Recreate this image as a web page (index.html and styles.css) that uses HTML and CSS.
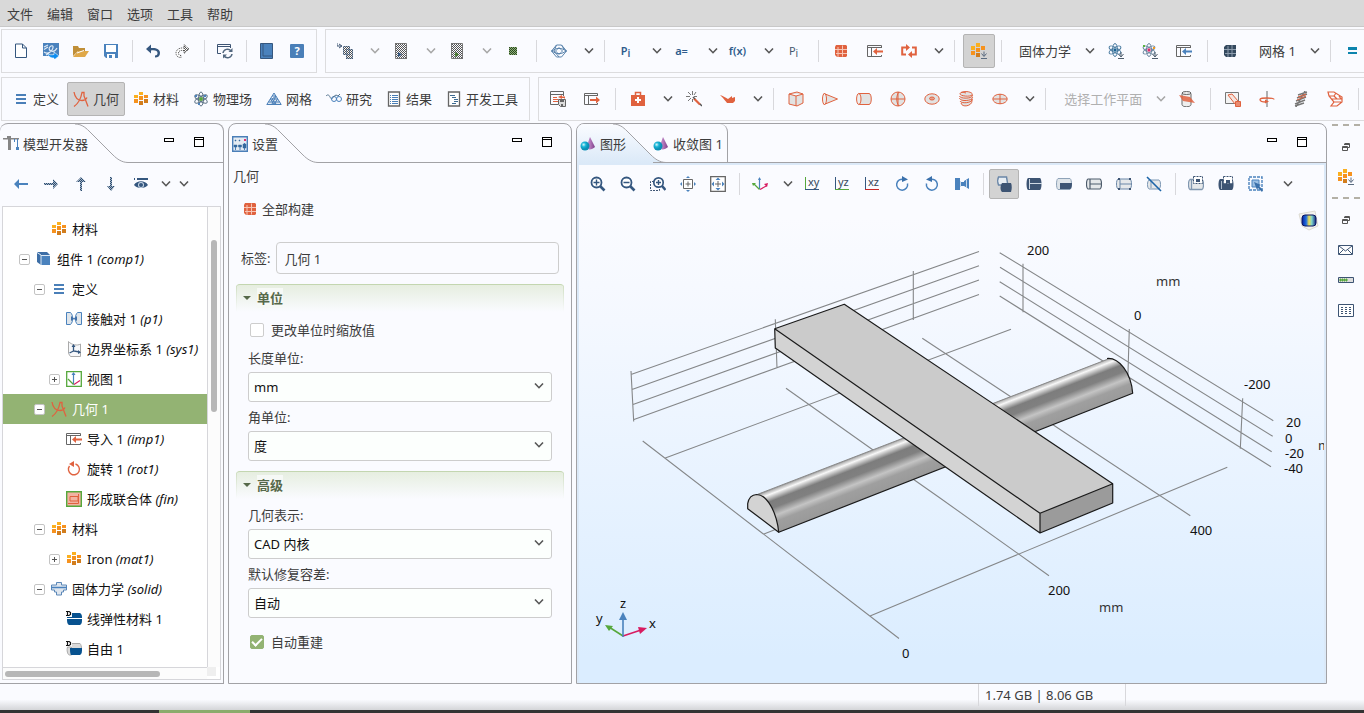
FILE: index.html
```html
<!DOCTYPE html>
<html lang="zh-CN">
<head>
<meta charset="utf-8">
<title>模型开发器</title>
<link rel="stylesheet" href="styles.css">
</head>
<body>
<svg class="sprite" aria-hidden="true">
  <defs>
    <pattern id="dither" width="2" height="2" patternUnits="userSpaceOnUse"><path fill="#555" d="M0 0h1v1H0zM1 1h1v1H1z"/></pattern>
    <pattern id="dither-blue" width="2" height="2" patternUnits="userSpaceOnUse"><path fill="#a5b4c6" d="M0 0h2v2H0z"/><path fill="#2b4c70" d="M0 0h1v1H0zM1 1h1v1H1z"/></pattern>
    <pattern id="dither-green" width="2" height="2" patternUnits="userSpaceOnUse"><path fill="#8fb07a" d="M0 0h2v2H0z"/><path fill="#2c4a20" d="M0 0h1v1H0zM1 1h1v1H1z"/></pattern>
    <linearGradient id="cone"><stop offset="0" stop-color="#c9a0cf"/><stop offset=".5" stop-color="#b074b8"/><stop offset="1" stop-color="#7c3f88"/></linearGradient>
    <radialGradient id="ball" cx=".35" cy=".35"><stop offset="0" stop-color="#d5f6fb"/><stop offset=".5" stop-color="#18b5d6"/><stop offset="1" stop-color="#0a8fb5"/></radialGradient>
    <linearGradient id="rainbow"><stop offset="0" stop-color="#0a1f9a"/><stop offset=".3" stop-color="#1f6fe0"/><stop offset=".5" stop-color="#f2dc4a"/><stop offset=".7" stop-color="#7fd6d0"/><stop offset="1" stop-color="#10207a"/></linearGradient>
  </defs>
  <symbol id="chev" viewBox="0 0 16 16"><path d="m4 5.500 4 4.200 4-4.200" fill="none" stroke="currentColor" stroke-width="1.600"/></symbol>
  <symbol id="new" viewBox="0 0 16 16"><path d="M2.500 1h7l4 4v9.500h-11zM9.500 1v4h4" fill="#fff" stroke="#35577f"/></symbol>
  <symbol id="app" viewBox="0 0 16 16"><path d="M0 0h16v13H0z" fill="#4a82bd"/><path d="M1 9c3 2 6 1 8-2s1-5-1-4-3 4 0 5 5-1 6-3M1 4l4-2M1 6.500 5 4M3 12l3-2" fill="none" stroke="#dfeaf5" stroke-width="1.200"/><path d="M5 10c1 2 3 2 6 1.500V9l5 4-5 4v-2c-4 0-6-2-6-5z" fill="#0d8df0" stroke="#fff" stroke-width=".6"/></symbol>
  <symbol id="open" viewBox="0 0 16 16"><path d="M0 13V3h5l1 2h6v3H5z" fill="#c08f38"/><path d="m0 14 5-6h11l-4 6z" fill="#dfa849"/><path d="m4 10 4-1.500 3-1" stroke="#fff" fill="none"/></symbol>
  <symbol id="save" viewBox="0 0 16 16"><path d="M1 1h14v14H3l-2-2z" fill="#4a82bd"/><path d="M3 2h10v7H3zM4 11h8v4H4z" fill="#fff"/><path d="M6 12h3v3H6z" fill="#4a82bd"/></symbol>
  <symbol id="undo" viewBox="0 0 16 16"><path d="m1 6 5-4.500V5c5-.5 9 1 9 5 0 3-2 4.500-5 4.500v-2c2 0 2.500-1 2.500-2.500 0-2-2-3-6.500-2.500v3z" fill="#35577f"/></symbol>
  <symbol id="redo" viewBox="0 0 16 16"><path d="m14 6-5-4.500V5C4 4.500 1 7 1 10s2 4.500 5 4.500v-2c-2 0-2.500-1-2.500-2.500 0-2 2-3 5.500-2.500v3z" fill="#fff" stroke="#444" stroke-dasharray="1 1"/><path d="m9 2 5 4-5 4z" fill="url(#dither)"/></symbol>
  <symbol id="reset" viewBox="0 0 16 16"><path d="M4 10.500H.5v-9h13V5M1 3.500h12" fill="none" stroke="#3d5473"/><path d="M6 10a4.500 4.500 0 0 1 8-2M15 11a4.500 4.500 0 0 1-8 2" fill="none" stroke="#52677f" stroke-width="1.500"/><path d="M15.500 5v4h-4zM6 15.500v-4h4z" fill="#52677f"/></symbol>
  <symbol id="book" viewBox="0 0 16 16"><path d="M1.500.5h12v15h-12z" fill="#4a82bd" stroke="#35577f"/><path d="M4 1v12h9" fill="none" stroke="#35577f"/></symbol>
  <symbol id="eq3" viewBox="0 0 16 16"><path d="M3 3h10v2H3zM3 7h10v2H3zM3 11h10v2H3z" fill="#4a7fb8"/></symbol>
  <symbol id="compass" viewBox="0 0 16 16"><path d="M1 15.500C6 12 8 7 9 1.500h2V5l4 10.500M1 1c1 6 4 8.500 8 8.500 2 0 4-1 5-3" fill="none" stroke="#e0623f" stroke-width="1.300"/></symbol>
  <symbol id="mat" viewBox="0 0 16 16"><path fill="#fbb01f" d="M6 1h4v3H6zM1 4h4v3H1z"/><path fill="#f6921e" d="M6 5h4v4H6zM1 8h4v4H1zM11 4h4v3h-4z"/><path fill="#d27d1d" d="M6 10h4v4H6zM11 8h4v4h-4z"/></symbol>
  <symbol id="matadd" viewBox="0 0 16 16"><g transform="translate(-1 0)"><path fill="#fbb01f" d="M6 0h4v4H6zM1 3h4v4H1z"/><path fill="#f6921e" d="M6 5h4v4H6zM1 8h4v4H1zM11 3h4v4h-4z"/><path fill="#d27d1d" d="M6 10h4v4H6z"/></g><path d="M10 15.500h6M13 8.500V13m-2.500-2.500 2.500 3 2.500-3" fill="none" stroke="#5a6b80"/></symbol>
  <symbol id="atom" viewBox="0 0 16 16"><g fill="none" stroke="#5d7286"><ellipse cx="8" cy="8" rx="2.500" ry="7"/><ellipse cx="8" cy="8" rx="2.500" ry="7" transform="rotate(60 8 8)"/><ellipse cx="8" cy="8" rx="2.500" ry="7" transform="rotate(120 8 8)"/></g><circle cx="8" cy="8" r="2" fill="#5aa63e"/><path d="M2 4h2v2H2zM11 4h2v2h-2zM5 12h2v2H5z" fill="#4a82bd"/></symbol>
  <symbol id="atomadd" viewBox="0 0 16 16"><g fill="none" stroke="#4a7ba0"><ellipse cx="7" cy="7" rx="2.500" ry="6.500"/><ellipse cx="7" cy="7" rx="2.500" ry="6.500" transform="rotate(60 7 7)"/><ellipse cx="7" cy="7" rx="2.500" ry="6.500" transform="rotate(120 7 7)"/></g><circle cx="7" cy="7" r="1.700" fill="#1a6394"/><path d="M10 15.500h6M13 9v4m-2.500-2 2.500 3 2.500-3" fill="none" stroke="#4d5c6c"/></symbol>
  <symbol id="atommulti" viewBox="0 0 16 16"><g fill="none" stroke="#6b87a0"><ellipse cx="7" cy="7" rx="2.500" ry="6.500"/><ellipse cx="7" cy="7" rx="2.500" ry="6.500" transform="rotate(60 7 7)"/><ellipse cx="7" cy="7" rx="2.500" ry="6.500" transform="rotate(120 7 7)"/></g><circle cx="7" cy="7" r="1.700" fill="#e0306e"/><path d="M1 2h2v2H1z" fill="#5ab33e"/><path d="M11 4h2v2h-2z" fill="#f59a1e"/><path d="M10 15.500h6M13 9v4m-2.500-2 2.500 3 2.500-3" fill="none" stroke="#4d5c6c"/></symbol>
  <symbol id="mesh" viewBox="0 0 16 16"><path d="M8 2 .8 13.500h14.400zM4.500 8h7L8 13.500zM6 5h4l-4 8M10 5 6 8l4 5M2.500 11h11" fill="#dce6f1" stroke="#4a7fb8"/></symbol>
  <symbol id="study" viewBox="0 0 16 16"><path d="M0 5c2-2 3-1 4 1s2 3 3 0" fill="none" stroke="#55748f"/><circle cx="8" cy="8" r="2.500" fill="none" stroke="#4a82bd"/><circle cx="13" cy="8" r="2.500" fill="none" stroke="#4a82bd"/><path d="m7 6 3-2 2 1 2-2" fill="none" stroke="#55748f"/></symbol>
  <symbol id="result" viewBox="0 0 16 16"><path d="M2.500 1h11v14h-11z" fill="#fff" stroke="#666" stroke-width="1.300"/><path d="M4 4.500h1m1 0h6m-8 2h1m1 0h6m-8 2h1m1 0h6m-8 2h1m1 0h6m-8 2h1m1 0h6" stroke="#4a7fb8"/></symbol>
  <symbol id="dev" viewBox="0 0 16 16"><path d="M2.500 1h11v14h-11z" fill="#fff" stroke="#666" stroke-width="1.300"/><path d="M4 4.500h5m-3 2h4m-2 2h4m-4 2h4m-6 2h4" stroke="#3f6c93"/></symbol>
  <symbol id="copyrun" viewBox="0 0 16 16"><path d="M0 0v3h4M2 1l3 2-3 2" fill="none" stroke="#3d5473"/><path d="M6 3h7v9H6zM9 6h7v10H9z" fill="url(#dither)"/><path d="M6.500 3.500h6v8h-6zM9.500 6.500h6v9h-6z" fill="none" stroke="#35577f" stroke-dasharray="1 1"/></symbol>
  <symbol id="runblue" viewBox="0 0 16 16"><path d="M2 0h12v16H2z" fill="url(#dither)"/><path d="M2.500.5h11v15h-11z" fill="none" stroke="#777"/><path d="m5 9 4 2.500L5 14z" fill="#35577f"/></symbol>
  <symbol id="rungreen" viewBox="0 0 16 16"><path d="M2 0h12v16H2z" fill="url(#dither)"/><path d="M2.500.5h11v15h-11z" fill="none" stroke="#777"/><path d="m6 9 4 2.500L6 14z" fill="#477a30"/></symbol>
  <symbol id="stop" viewBox="0 0 16 16"><path d="M4 4h8v8H4z" fill="url(#dither-green)"/></symbol>
  <symbol id="diamond" viewBox="0 0 16 16"><path d="M.5 8 5.500 2h5l5 6-5 6h-5zM.5 8l5-2.500h5l5 2.500-5 2.500h-5zM5.500 2 3 8l5 6M10.500 2l3 5M8 4.500 11.500 8 8 11.500 4.500 8z" fill="none" stroke="#5b84ad"/></symbol>
  <symbol id="cube" viewBox="0 0 16 16"><path d="m2 4 1-2h10l1 1v10l-1 1H4l-2-2z" fill="#e0623f"/><path d="M5 4v10M9.500 2.500v11M2 6.500h12M3 10.500h11" stroke="#f7c5b5" fill="none"/></symbol>
  <symbol id="cubenavy" viewBox="0 0 16 16"><path d="m2 4 2-2h10v10l-1 2H4l-2-2z" fill="#34495e"/><path d="M6 3v11M10 2v12M2 6.500h12M3 10.500h11" stroke="#8d9dae" fill="none"/></symbol>
  <symbol id="importred" viewBox="0 0 16 16"><path d="M14.500 5V2.500H.500v11h14V12M1 4.500h13M4.500 5v8" fill="none" stroke="#666"/><path d="m6 8.500 4-3.500v2.500h6v2h-6V12z" fill="#e0623f"/></symbol>
  <symbol id="importblue" viewBox="0 0 16 16"><path d="M14.500 5V2.500H.500v11h14V12M1 4.500h13M4.500 5v8" fill="none" stroke="#666"/><path d="m6 8.500 4-3.500v2.500h6v2h-6V12z" fill="#4a82bd"/></symbol>
  <symbol id="exportred" viewBox="0 0 16 16"><path d="M13.500 5V2.500H.500v11h13V12M1 4.500h12M4.500 5v8" fill="none" stroke="#666"/><path d="m16 9-4-3.500V8H6v2h6v2.500z" fill="#e0623f"/></symbol>
  <symbol id="loop" viewBox="0 0 16 16"><path d="M6 4.500H1.200v7H5M10 11.500h4.800v-7H11" fill="none" stroke="#e0623f" stroke-width="2"/><path d="m5 1 4 3.500L5 8zM11 8v7l-4-3.500z" fill="#e0623f"/></symbol>
  <symbol id="eq2" viewBox="0 0 16 16"><path d="M3 4h9v3H3zM3 9h9v2H3z" fill="#0c84ad"/></symbol>
  <symbol id="report" viewBox="0 0 16 16"><path d="M8 13.500H.5v-13h13V5M.5 3.500h13" fill="none" stroke="#666"/><path d="M3 6.500h4m-4 2h5m-5 2h5" stroke="#e0623f"/><path d="m8 6 4-2v1.500h3v2h-1V7h-2v1z" fill="#e0623f"/><path d="M8.500 8.500h7v7h-5l-2-2z" fill="#ddd" stroke="#666"/><path d="M10 9h4v2h-4zM11 13h2v2h-2z" fill="#666"/></symbol>
  <symbol id="medkit" viewBox="0 0 16 16"><path d="M1 4h14v11H1z" fill="#e0623f"/><path d="M5.500 4V1.500h5V4" fill="none" stroke="#e0623f" stroke-width="1.500"/><path d="M7 6h2v2h2v2H9v2H7v-2H5V8h2z" fill="#fff"/></symbol>
  <symbol id="wand" viewBox="0 0 16 16"><path d="M6.500 0v4m0 4v3M0 5.500h4m4 0h3M2 1l3 3m3 0 2-3M2 10l3-3" stroke="#777" fill="none"/><path d="m8 7.500 6 6" stroke="#e0623f" stroke-width="2.200"/><path d="m7 6 2 2m5 5 2 2" stroke="#555" stroke-width="1.500"/></symbol>
  <symbol id="sweep" viewBox="0 0 16 16"><path d="M0 4c3 1 5 2 8 4l4-3v2l3-1v4l-2 2H7c-1-2-3-3-4-5z" fill="#e0623f"/></symbol>
  <symbol id="box3" viewBox="0 0 16 16"><path d="m1 3 8-2 6 2v9l-6 3-8-2zM1 3l7 2 7-2M8 5v10" fill="#e2e2e2" stroke="#e0623f"/></symbol>
  <symbol id="cone3" viewBox="0 0 16 16"><path d="M2 2.500 15.500 8 2 13.500z" fill="#e2e2e2" stroke="#e0623f"/><ellipse cx="2.500" cy="8" rx="2" ry="5.500" fill="#eee" stroke="#e0623f"/></symbol>
  <symbol id="cyl3" viewBox="0 0 16 16"><path d="M3 2.500h10c3 0 3 11 0 11H3z" fill="#e2e2e2" stroke="#e0623f"/><ellipse cx="2.800" cy="8" rx="2.200" ry="5.500" fill="#eee" stroke="#e0623f"/></symbol>
  <symbol id="sphere3" viewBox="0 0 16 16"><circle cx="8" cy="8" r="7" fill="#e2e2e2" stroke="#e0623f"/><path d="M1 8h14M8 1v14M9 1c-3 3-3 11 0 14" fill="none" stroke="#e0623f"/></symbol>
  <symbol id="torus3" viewBox="0 0 16 16"><ellipse cx="8" cy="8" rx="7.200" ry="5.200" fill="#e2e2e2" stroke="#e0623f"/><ellipse cx="8" cy="7.500" rx="2.500" ry="1.500" fill="#e9a08b" stroke="#e0623f"/></symbol>
  <symbol id="helix3" viewBox="0 0 16 16"><path d="M3 1.500C9-1 16 2 14 4S2 5 2 3s3-2 6-1M1.500 5c0 3 14 3 13-1M1.500 7c0 4 14 3 13-1M2 10c1 3 13 2 12-2M3 12c1 5 11 3 11-2v-2" fill="#e2e2e2" stroke="#e0623f"/></symbol>
  <symbol id="ellip3" viewBox="0 0 16 16"><ellipse cx="8" cy="8" rx="7.200" ry="4.800" fill="#e2e2e2" stroke="#e0623f"/><path d="M1 8h14M8 3v10" stroke="#e0623f"/></symbol>
  <symbol id="section" viewBox="0 0 16 16"><path d="M3 2.500v11c0 3 9 3 9 0v-11" fill="#eee" stroke="#666"/><ellipse cx="7.500" cy="2" rx="4.500" ry="1.500" fill="#eee" stroke="#666"/><path d="m0 4 11 2 5 6-12-2z" fill="#e0623f" opacity=".85"/></symbol>
  <symbol id="work" viewBox="0 0 16 16"><path d="M.5 1.500h13v11H.5z" fill="#f3f3f3" stroke="#777"/><path d="m3 4 4-1 6 7-3 3z" fill="#f6e4de" stroke="#e0623f"/><path d="M10.500 10.500h5v5h-5z" fill="#e98b70" stroke="#e0623f"/></symbol>
  <symbol id="revolve" viewBox="0 0 16 16"><path d="M8 0v16" stroke="#666"/><path d="M7 11C3 11 1 10 1 8.500S4 7 8 7s7 0 7 1.500" fill="none" stroke="#e0623f" stroke-width="1.300"/><path d="m6 8.500 4 2-4 2z" fill="#e0623f"/></symbol>
  <symbol id="coil" viewBox="0 0 16 16"><path d="m3 16 9-16M5 4l9-3M4 7l10-4M3 10l10-4M2 13l10-4M2 15l9-3" stroke="#777" stroke-width="1.400"/><path d="m4 9 9-4M5 6l8-3" stroke="#e0623f"/></symbol>
  <symbol id="loft" viewBox="0 0 16 16"><path d="m1 1 6 0 8 5v5l-5 4H4l3-4L2 5zM2 5h5l2-3M5 8h9l-2-3M6 11h8M7 5l3 3" fill="none" stroke="#e0623f" stroke-width="1.200"/></symbol>
  <symbol id="crane" viewBox="0 0 16 16"><path d="M0 2h16v1.500H8V14H5V3.500H0zM4 0h4v2H4z" fill="#858585"/><path d="M11.500 3v3M14.500 3v9" stroke="#4a82bd"/><path d="M13 11h3v3h-3z" fill="#4a82bd"/></symbol>
  <symbol id="left" viewBox="0 0 16 16"><path d="m1 8 5-5v4h9v2H6v4z" fill="#4a82bd"/></symbol>
  <symbol id="right" viewBox="0 0 16 16"><path d="m15 8-5-5v4H1v2h9v4z" fill="url(#dither-blue)"/></symbol>
  <symbol id="up" viewBox="0 0 16 16"><path d="m8 1 5 5H9v9H7V6H3z" fill="url(#dither-blue)"/></symbol>
  <symbol id="down" viewBox="0 0 16 16"><path d="m8 15 4-5H9V1H7v9H4z" fill="url(#dither-blue)"/></symbol>
  <symbol id="eye" viewBox="0 0 16 16"><path d="M1 2h1v2H1zM4 2h11v2H4zM1 9c3-5 11-5 14 0-3 4-11 4-14 0z" fill="#35577f"/><circle cx="8" cy="9" r="3" fill="#c8d6e6"/><circle cx="8" cy="9" r="2" fill="#35577f"/></symbol>
  <symbol id="comp" viewBox="0 0 16 16"><path d="M1 1h10l3 3v10H5l-4-3z" fill="#3d6ea6"/><path d="M5 4h9v10H5z" fill="#4a82bd"/><path d="M1 1.500 5 4v10M5 4.500h9" fill="none" stroke="#dde9f5"/></symbol>
  <symbol id="pair" viewBox="0 0 16 16"><path d="M.5 1.500h4c3 3 3 9 0 12h-4zM15.500 1.500h-4c-3 3-3 9 0 12h4z" fill="#dfe5ea" stroke="#4a82bd"/><path d="m5 5 3 2.500L11 5v5L8 8l-3 2z" fill="#3f6fa8"/></symbol>
  <symbol id="sys" viewBox="0 0 16 16"><path d="M2.500.5v12l2 3h10V3c-3 2-9 1-12-2.500" fill="#f7f8fa" stroke="#aaa"/><path d="M7.500 4v6l6 1M7.500 10l-4 2" fill="none" stroke="#35577f" stroke-width="1.300"/><path d="m7.500 3 2 3h-4zM15 11.500l-3 1.500V9z" fill="#35577f"/></symbol>
  <symbol id="view" viewBox="0 0 16 16"><path d="M.7.7h14.600v14.600H.7z" fill="#fff" stroke="#56a83c" stroke-width="1.300"/><path d="M7.500 13.500V2" stroke="#4a82bd" stroke-width="1.200"/><path d="M7.500 13.500 2 8" stroke="#56a83c" stroke-width="1.200"/><path d="m8 13.500 6-4" stroke="#d81b60" stroke-width="1.200"/><path d="m7.500 1 2 3h-4z" fill="#4a82bd"/></symbol>
  <symbol id="rot" viewBox="0 0 16 16"><path d="M3.500 5a5.500 5.500 0 1 0 6-2" fill="none" stroke="#e0623f" stroke-width="1.400"/><path d="M8 0v6L3 3z" fill="#e0623f"/></symbol>
  <symbol id="union" viewBox="0 0 16 16"><path d="M.7.7h14.600v14.600H.7z" fill="#f2b3a2" stroke="#56a83c" stroke-width="1.400"/><path d="M4 5.500h8V10H4zM2 12.500h10.500V3" fill="none" stroke="#e0623f"/></symbol>
  <symbol id="solid" viewBox="0 0 16 16"><path d="M5.500 1.500h5V4h5v5h-3v2h-2v3h-5v-3h-2V9h-3V4h5z" fill="#dfe6ee" stroke="#5c88b8"/><path d="M0 6.500h16" stroke="#4a82bd" stroke-width="1.500"/></symbol>
  <symbol id="dsolid" viewBox="0 0 16 16"><path d="M6 2h8c2 1 2 3 2 5H6zM1 8h15c0 3 0 5-2 6H3C1 13 1 10 1 8zM1 6h5v1H1z" fill="#07528f"/><path d="M0 .5h3l1.500 1v2l-1.500 1H0M1.500 1v3.500" fill="none" stroke="#111" stroke-width="1.200"/></symbol>
  <symbol id="dfree" viewBox="0 0 16 16"><path d="M6 2.500h8c1 1 1.500 3 1.500 5h-10V6h-4c-1 3 0 8 2 8h2" fill="#dadada" stroke="#aaa"/><path d="M4 7h12c0 4 0 6-2 7H5c-1-1-1-5-1-7z" fill="#07528f"/><path d="M0 .5h3l1.500 1v2l-1.500 1H0M1.500 1v3.500" fill="none" stroke="#111" stroke-width="1.200"/></symbol>
  <symbol id="sliders" viewBox="0 0 16 16"><path d="M.7.7h14.600v14.600H.7z" fill="#e4ebf2" stroke="#4a7fb8" stroke-width="1.400"/><path d="M3.500 9v5M8 9v5M12.500 7v7" stroke="#4a7fb8"/><path d="M2 9h3v2H2zM6.500 9h3v2h-3zM11 8h3v4h-3zM3 4h1v1H3zM7 4h1v1H7z" fill="#35699f" stroke="#35699f" stroke-width=".5"/><path d="M12 3h2v2h-2z" fill="#e0306e"/></symbol>
  <symbol id="ballcone" viewBox="0 0 16 16"><path d="M10 1 6 12c2 2 6 2 9-1z" fill="url(#cone)"/><circle cx="5" cy="10" r="4.500" fill="url(#ball)"/></symbol>
  <symbol id="zin" viewBox="0 0 16 16"><circle cx="6.500" cy="6.500" r="5" fill="#fff" stroke="#35577f" stroke-width="1.800"/><path d="m10 10 4.500 4.500" stroke="#35577f" stroke-width="2.600"/><path d="M3.500 6.500h6m-3-3v6" stroke="#35577f" stroke-width="1.400"/></symbol>
  <symbol id="zout" viewBox="0 0 16 16"><circle cx="6.500" cy="6.500" r="5" fill="#fff" stroke="#35577f" stroke-width="1.800"/><path d="m10 10 4.500 4.500" stroke="#35577f" stroke-width="2.600"/><path d="M3.500 6.500h6" stroke="#35577f" stroke-width="1.400"/></symbol>
  <symbol id="zbox" viewBox="0 0 16 16"><path d="M4 5.500H.5v9h9V12" fill="none" stroke="#3d5473" stroke-dasharray="2 1"/><circle cx="8.500" cy="6.500" r="4.700" fill="#fff" stroke="#35577f" stroke-width="1.700"/><path d="m12 10 3.500 4" stroke="#35577f" stroke-width="2.600"/><path d="M6 6.500h5M8.500 4v5" stroke="#35577f" stroke-width="1.400"/></symbol>
  <symbol id="zsel" viewBox="0 0 16 16"><path d="M3.500 3.500h9v9h-9z" fill="#fff" stroke="#666"/><path d="M5.500 8h5M8 5.500v5" stroke="#666"/><path d="m8 0 2 2H6zM8 16l2-2H6zM0 8l2-2v4zM16 8l-2-2v4z" fill="#4a82bd"/></symbol>
  <symbol id="zext" viewBox="0 0 16 16"><path d="M.7.7h14.600v14.600H.7z" fill="#fff" stroke="#666" stroke-width="1.300"/><path d="M5 8h6M8 5v6" stroke="#666"/><path d="m8 1.500 2.500 2.500h-5zM8 14.500 10.500 12h-5zM1.500 8 4 5.500v5zM14.500 8 12 5.500v5z" fill="#4a82bd"/></symbol>
  <symbol id="axes" viewBox="0 0 16 16"><path d="M7.500 13V2" stroke="#4a82bd" stroke-width="1.200"/><path d="M7.500 13.500 2 8" stroke="#56a83c" stroke-width="1.200"/><path d="m8 13.500 7-4" stroke="#d81b60" stroke-width="1.200"/><path d="m7.500 1 1.500 3H6z" fill="#4a82bd"/><path d="M0 7h4L1 10z" fill="#56a83c"/><path d="m16 7-1 4-3-3z" fill="#d81b60"/></symbol>
  <symbol id="cw" viewBox="0 0 16 16"><path d="M10 3.500a5.500 5.500 0 1 0 3.500 4" fill="none" stroke="#4a82bd" stroke-width="1.500"/><path d="M8 0v6l6-2.500z" fill="#3a70ab"/></symbol>
  <symbol id="ccw" viewBox="0 0 16 16"><path d="M6 3.500a5.500 5.500 0 1 1-3.500 4" fill="none" stroke="#4a82bd" stroke-width="1.500"/><path d="M8 0v6L2 3.500z" fill="#3a70ab"/></symbol>
  <symbol id="camera" viewBox="0 0 16 16"><path d="M1 2h5v12H1zM7 6h3v4H7zM10 5l5-3v11l-5-3z" fill="#4a82bd"/><path d="M6.500 5v6M12.500 4v8" stroke="#c9daec"/></symbol>
  <symbol id="transp" viewBox="0 0 16 16"><path d="M2.500 1h8l1 6-2 2h-7c-1-2-1-6 0-8z" fill="#e7edf3" stroke="#6b87a8" stroke-width="1.500"/><path d="M6 7h9c1 2 1 6 0 9H6c-2-2-2-6 0-9z" fill="#3d5473"/></symbol>
  <symbol id="solidc" viewBox="0 0 16 16"><path d="M2 2h12c2 1 2 11 0 12H2C0 13 0 3 2 2z" fill="#3d5473"/><path d="M3 7.500h13M3.500 3v10" stroke="#cfd9e4"/></symbol>
  <symbol id="halfc" viewBox="0 0 16 16"><path d="M2 2.500h12c2 1 2 10 0 11H2c-2-1-2-10 0-11z" fill="#dfe5ea" stroke="#8fa3b8"/><path d="M4 7h12c0 4-1 6-2 6H4z" fill="#3d5473"/></symbol>
  <symbol id="edgec" viewBox="0 0 16 16"><path d="M2 3h12c2 1 2 9 0 10H2C0 12 0 4 2 3zM4 3.500v9M4 8h11" fill="#e5e8ea" stroke="#4d5c6c" stroke-width="1.200"/></symbol>
  <symbol id="wirec" viewBox="0 0 16 16"><path d="M2 3h12c2 1 2 9 0 10H2C0 12 0 4 2 3zM4 3.500v9M4 8h11" fill="#e5e8ea" stroke="#6b87a8"/><path d="M2 2h2v2H2zM13 2h2v2h-2zM2 12h2v2H2zM13 12h2v2h-2z" fill="#3d5473"/></symbol>
  <symbol id="nosel" viewBox="0 0 16 16"><path d="M3 4h10c2 1 2 8 0 9H3C1 12 1 5 3 4zM5 5v7" fill="#e5e8ea" stroke="#7b96b3"/><path d="m1 1 14 14" stroke="#1b64a8" stroke-width="1.600"/></symbol>
  <symbol id="hide" viewBox="0 0 16 16"><path d="M2 3.500h12c2 1 2 9 0 10H2c-2-1-2-9 0-10zM3.500 4v9" fill="#e5e8ea" stroke="#8097b0" stroke-width="1.300"/><path d="M5.500.5h9v7h-9z" fill="#fff" stroke="#3d5473" stroke-dasharray="2 1"/><path d="M8 3h4v3H8z" fill="#3d5473"/></symbol>
  <symbol id="shown" viewBox="0 0 16 16"><path d="M2 3h12c2 1 2 10 0 11H2C0 13 0 4 2 3z" fill="#3d5473"/><path d="M3.500 5v8" stroke="#aebccb"/><path d="M5.500.5h9v7h-9z" fill="#fff" stroke="#3d5473" stroke-dasharray="2 1"/><path d="M8 4h4v3H8z" fill="#3d5473"/></symbol>
  <symbol id="boxsel" viewBox="0 0 16 16"><path d="M1 1h13v13H1z" fill="none" stroke="#4a82bd" stroke-width="1.400" stroke-dasharray="3 1"/><path d="M4 4h7v7H4z" fill="#9cc0e4" stroke="#4a82bd"/><path d="m6 6 7 3-2 1 4 4-1 2-4-4-1 2z" fill="#3a70ab"/></symbol>
  <symbol id="min" viewBox="0 0 16 16"><path d="M3 4h10v4H3z"/><path d="M4 5h8v2H4z" fill="#fff"/></symbol>
  <symbol id="max" viewBox="0 0 16 16"><path d="M3 3h10v10H3z"/><path d="M4 4h8v1H4zM4 6h8v6H4z" fill="#fff"/></symbol>
  <symbol id="restore" viewBox="0 0 16 16"><path d="M6.500 4.500h5v4h-2M6 5.500h6M4.500 7.500h5v4h-5zM4 8.500h6" fill="none" stroke="#555"/></symbol>
  <symbol id="mail" viewBox="0 0 16 16"><path d="M.5 3.500h14v9H.5zM1 4l6.500 5L14 4M1 12l4-4M14 12l-4-4" fill="#fff" stroke="#3d5473"/></symbol>
  <symbol id="progress" viewBox="0 0 16 16"><path d="M.5 5.500h15v5H.5z" fill="#ddd" stroke="#3d5473"/><path d="M2 7h1v2H2zM4 7h1v2H4zM6 7h1v2H6zM8 7h1v2H8z" stroke="#56a83c" fill="#56a83c"/></symbol>
  <symbol id="tbl" viewBox="0 0 16 16"><path d="M.5 2.500h15v12H.5z" fill="#fff" stroke="#3d5473"/><path d="M3 5.500h10M3 7.500h10M3 9.500h10M3 11.500h10" stroke="#3d5473" stroke-dasharray="2 2"/></symbol>
</svg>

<nav class="menubar" aria-label="主菜单">
  <button>文件</button><button>编辑</button><button>窗口</button><button>选项</button><button>工具</button><button>帮助</button>
</nav>

<div class="bars">
  <div class="bar-row">
    <div class="bar compact">
      <button class="ib" aria-label="新建"><svg><use href="#new"/></svg></button>
      <button class="ib" aria-label="应用程序"><svg><use href="#app"/></svg></button>
      <button class="ib" aria-label="打开"><svg><use href="#open"/></svg></button>
      <button class="ib" aria-label="保存"><svg><use href="#save"/></svg></button>
      <i class="sep"></i>
      <button class="ib" aria-label="撤销"><svg><use href="#undo"/></svg></button>
      <button class="ib" aria-label="重做"><svg><use href="#redo"/></svg></button>
      <i class="sep"></i>
      <button class="ib" aria-label="重置桌面"><svg><use href="#reset"/></svg></button>
      <i class="sep"></i>
      <button class="ib" aria-label="文档"><svg><use href="#book"/></svg></button>
      <button class="ib" aria-label="帮助"><span class="help">?</span></button>
    </div>
    <div class="bar wide">
      <button class="ib" aria-label="复制运行"><svg><use href="#copyrun"/></svg></button>
      <button class="cb off" aria-label="更多"><svg><use href="#chev"/></svg></button>
      <button class="ib" aria-label="计算"><svg><use href="#runblue"/></svg></button>
      <button class="cb off" aria-label="更多"><svg><use href="#chev"/></svg></button>
      <button class="ib" aria-label="运行"><svg><use href="#rungreen"/></svg></button>
      <button class="cb off" aria-label="更多"><svg><use href="#chev"/></svg></button>
      <button class="ib" aria-label="停止"><svg><use href="#stop"/></svg></button>
      <i class="sep"></i>
      <button class="ib" aria-label="选择"><svg><use href="#diamond"/></svg></button>
      <button class="cb" aria-label="更多"><svg><use href="#chev"/></svg></button>
      <i class="sep"></i>
      <button class="ib sym">P<sub>i</sub></button>
      <button class="cb" aria-label="更多"><svg><use href="#chev"/></svg></button>
      <button class="ib sym">a=</button>
      <button class="cb" aria-label="更多"><svg><use href="#chev"/></svg></button>
      <button class="ib sym">f(x)</button>
      <button class="cb" aria-label="更多"><svg><use href="#chev"/></svg></button>
      <button class="ib sym faint">P<sub>i</sub></button>
      <i class="sep"></i>
      <button class="ib" aria-label="全部构建"><svg><use href="#cube"/></svg></button>
      <button class="ib" aria-label="导入"><svg><use href="#importred"/></svg></button>
      <button class="ib" aria-label="同步"><svg><use href="#loop"/></svg></button>
      <button class="cb" aria-label="更多"><svg><use href="#chev"/></svg></button>
      <i class="sep"></i>
      <button class="ib on" aria-label="添加材料"><svg><use href="#matadd"/></svg></button>
      <i class="sep"></i>
      <button class="tx">固体力学</button>
      <button class="cb" aria-label="更多"><svg><use href="#chev"/></svg></button>
      <button class="ib" aria-label="添加物理场"><svg><use href="#atomadd"/></svg></button>
      <button class="ib" aria-label="添加多物理场"><svg><use href="#atommulti"/></svg></button>
      <button class="ib" aria-label="导入物理场"><svg><use href="#importblue"/></svg></button>
      <i class="sep"></i>
      <button class="ib" aria-label="构建网格"><svg><use href="#cubenavy"/></svg></button>
      <button class="tx">网格 1</button>
      <button class="cb" aria-label="更多"><svg><use href="#chev"/></svg></button>
      <i class="sep"></i>
      <button class="ib" aria-label="计算"><svg><use href="#eq2"/></svg></button>
    </div>
  </div>
  <div class="bar-row">
    <div class="bar ribbon">
      <button><svg><use href="#eq3"/></svg>定义</button>
      <button class="on"><svg><use href="#compass"/></svg>几何</button>
      <button><svg><use href="#mat"/></svg>材料</button>
      <button><svg><use href="#atom"/></svg>物理场</button>
      <button><svg><use href="#mesh"/></svg>网格</button>
      <button><svg><use href="#study"/></svg>研究</button>
      <button><svg><use href="#result"/></svg>结果</button>
      <button><svg><use href="#dev"/></svg>开发工具</button>
    </div>
    <div class="bar wide">
      <button class="ib" aria-label="报告"><svg><use href="#report"/></svg></button>
      <button class="ib" aria-label="导出"><svg><use href="#exportred"/></svg></button>
      <i class="sep"></i>
      <button class="ib" aria-label="修复"><svg><use href="#medkit"/></svg></button>
      <button class="cb" aria-label="更多"><svg><use href="#chev"/></svg></button>
      <button class="ib" aria-label="特征去除"><svg><use href="#wand"/></svg></button>
      <button class="ib" aria-label="清理"><svg><use href="#sweep"/></svg></button>
      <button class="cb" aria-label="更多"><svg><use href="#chev"/></svg></button>
      <i class="sep"></i>
      <button class="ib" aria-label="长方体"><svg><use href="#box3"/></svg></button>
      <button class="ib" aria-label="圆锥"><svg><use href="#cone3"/></svg></button>
      <button class="ib" aria-label="圆柱"><svg><use href="#cyl3"/></svg></button>
      <button class="ib" aria-label="球体"><svg><use href="#sphere3"/></svg></button>
      <button class="ib" aria-label="圆环"><svg><use href="#torus3"/></svg></button>
      <button class="ib" aria-label="螺旋"><svg><use href="#helix3"/></svg></button>
      <button class="ib" aria-label="椭球体"><svg><use href="#ellip3"/></svg></button>
      <button class="cb" aria-label="更多"><svg><use href="#chev"/></svg></button>
      <i class="sep"></i>
      <button class="tx off">选择工作平面</button>
      <button class="cb off" aria-label="更多"><svg><use href="#chev"/></svg></button>
      <button class="ib" aria-label="横截面"><svg><use href="#section"/></svg></button>
      <i class="sep"></i>
      <button class="ib" aria-label="工作平面"><svg><use href="#work"/></svg></button>
      <button class="ib" aria-label="旋转"><svg><use href="#revolve"/></svg></button>
      <button class="ib" aria-label="扫掠"><svg><use href="#coil"/></svg></button>
      <button class="ib" aria-label="放样"><svg><use href="#loft"/></svg></button>
      <i class="sep"></i>
    </div>
  </div>
</div>

<main class="workspace">
  <section class="panel">
    <header class="tabs">
      <span class="tab"><svg class="ic"><use href="#crane"/></svg>模型开发器</span>
      <svg class="curve" viewBox="0 0 53 39"><path d="M0 0C6 0 10 3 14 7l24 24c4 4 9 7.500 15 7.500"/></svg>
      <span class="rest"><button class="ib" aria-label="最小化"><svg><use href="#min"/></svg></button><button class="ib" aria-label="最大化"><svg><use href="#max"/></svg></button></span>
    </header>
    <div class="strip compact">
      <button class="ib" aria-label="后退"><svg><use href="#left"/></svg></button>
      <button class="ib" aria-label="前进"><svg><use href="#right"/></svg></button>
      <button class="ib" aria-label="上移"><svg><use href="#up"/></svg></button>
      <button class="ib" aria-label="下移"><svg><use href="#down"/></svg></button>
      <button class="ib" aria-label="显示"><svg><use href="#eye"/></svg></button>
      <button class="cb slim" aria-label="更多"><svg><use href="#chev"/></svg></button>
      <button class="cb slim" aria-label="菜单"><svg><use href="#chev"/></svg></button>
    </div>
    <div class="treebox">
      <ul class="tree">
        <li class="l2"><i class="tg none"></i><svg class="ic"><use href="#mat"/></svg><span>材料</span></li>
        <li class="l1"><i class="tg minus"></i><svg class="ic"><use href="#comp"/></svg><span>组件 1 <em>(comp1)</em></span></li>
        <li class="l2"><i class="tg minus"></i><svg class="ic"><use href="#eq3"/></svg><span>定义</span></li>
        <li class="l3"><i class="tg none"></i><svg class="ic"><use href="#pair"/></svg><span>接触对 1 <em>(p1)</em></span></li>
        <li class="l3"><i class="tg none"></i><svg class="ic"><use href="#sys"/></svg><span>边界坐标系 1 <em>(sys1)</em></span></li>
        <li class="l3"><i class="tg plus"></i><svg class="ic"><use href="#view"/></svg><span>视图 1</span></li>
        <li class="l2 sel"><i class="tg minus"></i><svg class="ic"><use href="#compass"/></svg><span>几何 1</span></li>
        <li class="l3"><i class="tg none"></i><svg class="ic"><use href="#importred"/></svg><span>导入 1 <em>(imp1)</em></span></li>
        <li class="l3"><i class="tg none"></i><svg class="ic"><use href="#rot"/></svg><span>旋转 1 <em>(rot1)</em></span></li>
        <li class="l3"><i class="tg none"></i><svg class="ic"><use href="#union"/></svg><span>形成联合体 <em>(fin)</em></span></li>
        <li class="l2"><i class="tg minus"></i><svg class="ic"><use href="#mat"/></svg><span>材料</span></li>
        <li class="l3"><i class="tg plus"></i><svg class="ic"><use href="#mat"/></svg><span>Iron <em>(mat1)</em></span></li>
        <li class="l2"><i class="tg minus"></i><svg class="ic"><use href="#solid"/></svg><span>固体力学 <em>(solid)</em></span></li>
        <li class="l3"><i class="tg none"></i><svg class="ic"><use href="#dsolid"/></svg><span>线弹性材料 1</span></li>
        <li class="l3"><i class="tg none"></i><svg class="ic"><use href="#dfree"/></svg><span>自由 1</span></li>
      </ul>
      <div class="vscroll"><i></i></div>
      <div class="hscroll"><i></i></div>
      <div class="corner"></div>
    </div>
  </section>

  <section class="panel">
    <header class="tabs">
      <span class="tab"><svg class="ic"><use href="#sliders"/></svg>设置</span>
      <svg class="curve" viewBox="0 0 53 39"><path d="M0 0C6 0 10 3 14 7l24 24c4 4 9 7.500 15 7.500"/></svg>
      <span class="rest"><button class="ib" aria-label="最小化"><svg><use href="#min"/></svg></button><button class="ib" aria-label="最大化"><svg><use href="#max"/></svg></button></span>
    </header>
    <form class="settings">
      <div class="kind">几何</div>
      <button type="button" class="build"><svg class="ic"><use href="#cube"/></svg>全部构建</button>
      <div class="name"><label for="label">标签:</label><input id="label" type="text" value="几何 1"></div>
      <div class="group">
        <h2><i class="tri"></i><span>单位</span></h2>
        <label class="check"><input type="checkbox">更改单位时缩放值</label>
        <label for="len">长度单位:</label>
        <div class="pick"><select id="len"><option>mm</option></select><svg class="ic"><use href="#chev"/></svg></div>
        <label for="ang">角单位:</label>
        <div class="pick"><select id="ang"><option>度</option></select><svg class="ic"><use href="#chev"/></svg></div>
      </div>
      <div class="group">
        <h2><i class="tri"></i><span>高级</span></h2>
        <label for="rep">几何表示:</label>
        <div class="pick"><select id="rep"><option>CAD 内核</option></select><svg class="ic"><use href="#chev"/></svg></div>
        <label for="tol">默认修复容差:</label>
        <div class="pick"><select id="tol"><option>自动</option></select><svg class="ic"><use href="#chev"/></svg></div>
        <label class="check last"><input type="checkbox" checked>自动重建</label>
      </div>
    </form>
  </section>

  <section class="panel">
    <header class="tabs">
      <span class="tab lit"><svg class="ic"><use href="#ballcone"/></svg>图形</span>
      <svg class="curve" viewBox="0 0 53 39"><defs><linearGradient id="tabfill" x2="0" y2="1"><stop offset="0" stop-color="#fafcff"/><stop offset="1" stop-color="#dbe9f8"/></linearGradient></defs><path class="fill" d="M0 0C6 0 10 3 14 7l24 24c4 4 9 8 15 8H0z"/><path d="M0 0C6 0 10 3 14 7l24 24c4 4 9 7.500 15 7.500"/></svg>
      <span class="tab second"><svg class="ic"><use href="#ballcone"/></svg>收敛图 1</span>
      <span class="rest"><button class="ib" aria-label="最小化"><svg><use href="#min"/></svg></button><button class="ib" aria-label="最大化"><svg><use href="#max"/></svg></button></span>
    </header>
    <div class="view">
      <div class="strip compact">
        <button class="ib" aria-label="放大"><svg><use href="#zin"/></svg></button>
        <button class="ib" aria-label="缩小"><svg><use href="#zout"/></svg></button>
        <button class="ib" aria-label="框选缩放"><svg><use href="#zbox"/></svg></button>
        <button class="ib" aria-label="缩放到选定对象"><svg><use href="#zsel"/></svg></button>
        <button class="ib" aria-label="缩放到窗口"><svg><use href="#zext"/></svg></button>
        <i class="sep"></i>
        <button class="ib" aria-label="默认视图"><svg><use href="#axes"/></svg></button>
        <button class="cb" aria-label="更多"><svg><use href="#chev"/></svg></button>
        <button class="ib" aria-label="xy 视图"><svg viewBox="0 0 16 16"><path d="M1.500 1v13" stroke="#56a83c"/><path d="M1 13.500h14" stroke="#35577f"/><text x="4" y="10">xy</text></svg></button>
        <button class="ib" aria-label="yz 视图"><svg viewBox="0 0 16 16"><path d="M1.500 1v13" stroke="#35577f"/><path d="M1 13.500h14" stroke="#56a83c"/><text x="4" y="10">yz</text></svg></button>
        <button class="ib" aria-label="xz 视图"><svg viewBox="0 0 16 16"><path d="M1.500 1v13" stroke="#35577f"/><path d="M1 13.500h14" stroke="#c62828"/><text x="4" y="10">xz</text></svg></button>
        <button class="ib" aria-label="顺时针"><svg><use href="#cw"/></svg></button>
        <button class="ib" aria-label="逆时针"><svg><use href="#ccw"/></svg></button>
        <button class="ib" aria-label="相机"><svg><use href="#camera"/></svg></button>
        <i class="sep"></i>
        <button class="ib on" aria-label="选择对象"><svg><use href="#transp"/></svg></button>
        <button class="ib" aria-label="选择域"><svg><use href="#solidc"/></svg></button>
        <button class="ib" aria-label="选择边界"><svg><use href="#halfc"/></svg></button>
        <button class="ib" aria-label="选择边"><svg><use href="#edgec"/></svg></button>
        <button class="ib" aria-label="选择点"><svg><use href="#wirec"/></svg></button>
        <button class="ib" aria-label="不选择"><svg><use href="#nosel"/></svg></button>
        <i class="sep"></i>
        <button class="ib" aria-label="隐藏"><svg><use href="#hide"/></svg></button>
        <button class="ib" aria-label="显示隐藏项"><svg><use href="#shown"/></svg></button>
        <button class="ib" aria-label="选择框"><svg><use href="#boxsel"/></svg></button>
        <button class="cb end" aria-label="更多"><svg><use href="#chev"/></svg></button>
      </div>
      <svg class="scene" viewBox="579 203 745 480" role="img" aria-label="几何图形">
        <defs>
          <linearGradient id="rod" gradientUnits="userSpaceOnUse" x1="757.700" y1="494.500" x2="773.200" y2="534.400">
            <stop offset="0" stop-color="#8f8f8f"/><stop offset=".03" stop-color="#bbb"/><stop offset=".1" stop-color="#f8f8f8"/><stop offset=".14" stop-color="#d8d8d8"/><stop offset=".26" stop-color="#7d7d7d"/><stop offset=".42" stop-color="#808080"/><stop offset=".6" stop-color="#c4c4c4"/><stop offset=".74" stop-color="#9f9f9f"/><stop offset="1" stop-color="#999"/>
          </linearGradient>
        </defs>
        <path class="grid" d="M631 374.500 979 251.500M632 389.500 979 265.700M633 404.500 979 280M634 419.500 979 294.500M631 371l2.700 50.500M775.300 319.300l1.700 49M913.300 271v49M999.700 252.700l273.600 168M1000 267.300l272.700 169M999.700 281.700l272 170M999.700 296 1271 466.700M1023 263.700v48.600M1129.300 329l-1.500 50M1242.700 398.300l-2.400 50.400M665.300 458 1011 329.300M763.300 534.300l28-11M870 616l357.300-148.700M642.700 441 899 638.500M786 388.300 872 449.300l41.300 30L940 498l109 77.700M922.300 338.300l87.700 58 43.300 28.700 137 90.700"/>
        <path fill="url(#rod)" d="M752 495.500 757.700 494.300 1110 358.300c10 0 20 15 22.700 35L778.700 532.300z"/>
        <path class="soft" d="M757.700 494.300 1110 358.300"/>
        <path class="edge" d="M1107 358.500c12-1 24 14 25.700 34.800L778.700 532.300"/>
        <path class="edge" fill="#d3d3d3" d="M747.700 508.700v-5c1-6 4-9 9-9.200 10 0 20 17 22 37.800z"/>
        <path fill="#cbcbcb" d="M774.700 328.700 844.300 304.300 1112.700 483.700 1040 513.300z"/>
        <path fill="#d3d3d3" d="M774.700 328.700 1040 513.300V533L775.300 348z"/>
        <path fill="#9b9b9b" d="m1040 513.300 72.700-29.600V503L1040 533z"/>
        <path class="edge" d="M774.700 328.700 844.300 304.300 1112.700 483.700V503L1040 533 775.300 348zL1040 513.300V533M1040 513.300l72.700-29.600"/>
        <g class="ticks">
          <text x="1027" y="255">200</text><text x="1156" y="286" class="unit">mm</text><text x="1134" y="320">0</text><text x="1244" y="389">-200</text>
          <text x="1286" y="427">20</text><text x="1285" y="443">0</text><text x="1285" y="458">-20</text><text x="1284" y="473">-40</text><text x="1318" y="450" class="unit">mm</text>
          <text x="1190" y="535">400</text><text x="1048" y="595">200</text><text x="1099" y="612" class="unit">mm</text><text x="902" y="658">0</text>
          <text x="620" y="608">z</text><text x="596" y="623">y</text><text x="649" y="628">x</text>
        </g>
        <g fill="none" stroke-width="1.600">
          <path stroke="#56a83c" d="m623 636-14-9"/><path stroke="#d81b60" d="m623 636 18-6"/><path stroke="#4a82bd" d="M623 637v-18"/>
        </g>
        <path fill="#56a83c" d="m605 625 8 1-4 5z"/><path fill="#d81b60" d="m647 628-9-1 2 7z"/><path fill="#4a82bd" d="m623 612 4 8h-8z"/>
        <path fill="#f4f3ef" stroke="#dedbd2" d="m1299 214 16-3 3 15-9 4-7-4z"/>
        <rect x="1302" y="215" width="14" height="11" rx="3" fill="url(#rainbow)" stroke="#0a1560"/>
      </svg>
    </div>
  </section>

  <aside class="rail">
    <hr>
    <button class="ib" aria-label="还原"><svg><use href="#restore"/></svg></button>
    <button class="ib" aria-label="添加材料"><svg><use href="#matadd"/></svg></button>
    <hr>
    <button class="ib" aria-label="还原"><svg><use href="#restore"/></svg></button>
    <button class="ib" aria-label="消息"><svg><use href="#mail"/></svg></button>
    <button class="ib" aria-label="进度"><svg><use href="#progress"/></svg></button>
    <button class="ib" aria-label="表格"><svg><use href="#tbl"/></svg></button>
  </aside>
</main>

<footer class="status"><span>1.74 GB | 8.06 GB</span></footer>
<div class="dock"><i></i></div>
</body>
</html>
```

FILE: styles.css
```css
* { box-sizing: border-box; }
html, body { margin: 0; }
body {
  min-height: 100vh;
  display: flex;
  flex-direction: column;
  background: #fafbff;
  color: #3c3c3c;
  font: 13px/20px "Noto Sans", "Noto Sans CJK SC", sans-serif;
  overflow: hidden;
}
button, input, select { font: inherit; color: inherit; }
button { border: 0; padding: 0; background: none; flex: none; white-space: nowrap; }
.sprite { position: absolute; width: 0; height: 0; }
.ic, .ib svg, .cb svg, .ribbon svg { width: 16px; height: 16px; flex: none; display: block; overflow: visible; }
.ib text { font-size: 11px; fill: #35485c; }
.help { width: 14px; height: 14px; line-height: 14px; border-radius: 1px; background: #4a7fb8; color: #fff; font-size: 11px; font-weight: 700; }

.menubar { height: 27px; display: flex; padding-top: 1px; background: #d9d9d9; border-bottom: 1px solid #c8c8c8; }
.menubar button { padding: 0 7px; }

.bars { display: flex; flex-direction: column; gap: 4px; padding: 2px 0 2px 1px; }
.bar-row { display: flex; gap: 8px; }
.bar { height: 44px; display: flex; align-items: center; border: 1px solid #dcdcde; padding: 0 4px; flex: none; }
.bar.wide { flex: 1 1 0; min-width: 0; overflow: hidden; border-right: 0; padding: 0 0 0 2px; }
.bar.ribbon { gap: 2px; padding: 0 5px; }
.ribbon button { height: 34px; display: flex; align-items: center; gap: 4px; padding: 0 6px; }

.ib { width: 34px; height: 34px; display: flex; align-items: center; justify-content: center; }
.compact .ib { width: 30px; }
.cb { width: 22px; height: 34px; display: flex; align-items: center; justify-content: flex-end; padding-right: 1px; color: #555; }
.cb.off { color: #a6a6a6; }
.cb.slim { width: 18px; padding-right: 0; }
.cb.end { width: 26px; }
.on { background: #d3d3d3; border: 1px solid #b4b4b4; border-radius: 2px; }
.wide .on { width: 32px; margin-left: 3px; }
.compact .on { height: 30px; }
.ribbon button.on { padding: 0 5px; }
.sep { width: 12px; height: 22px; flex: none; background: linear-gradient(#d8d8dc, #d8d8dc) 6px 0 / 1px 100% no-repeat; }
.tx { padding: 0 6px 0 12px; }
.tx.off { color: #b0b0b0; padding-left: 13px; }
.sym { color: #2f5b8c; font-weight: 600; font-size: 11px; padding-right: 3px; }
.sym sub { font-size: 10px; line-height: 10px; vertical-align: -4px; align-self: center; padding-top: 4px; }
.sym.faint { color: #44586f; font-weight: 400; }

.workspace { flex: 1; min-height: 0; display: grid; grid-template-columns: 224px 344px minmax(0, 1fr) 33px; gap: 4px; }
.panel { border: 1px solid #a2a2a6; border-radius: 8px 8px 0 0; display: flex; flex-direction: column; min-width: 0; overflow: hidden; }
.panel:first-child { border-left: 0; }
.tabs { display: flex; height: 39px; flex: none; }
.tab { display: flex; align-items: center; gap: 4px; padding-left: 3px; position: relative; z-index: 1; }
.tab.lit { background: linear-gradient(#fafcff, #dbe9f8) 0 0 / calc(100% - 13px) 100% no-repeat; }
.tab.second { padding: 0 4px 0 0; margin-left: -13px; border-right: 1px solid #a2a2a6; border-radius: 0 8px 0 0; box-shadow: inset 0 -1px #a2a2a6; }
.curve { width: 53px; height: 39px; margin-left: -13px; flex: none; overflow: visible; }
.curve path { fill: none; stroke: #a2a2a6; }
.curve .fill { fill: url(#tabfill); stroke: none; }
.rest { flex: 1; display: flex; justify-content: flex-end; padding-right: 9px; border-bottom: 1px solid #a2a2a6; }
.rest .ib { width: 30px; height: 36px; }
.strip { display: flex; align-items: center; height: 42px; flex: none; padding-left: 6px; }

.treebox {
  flex: 1;
  min-height: 0;
  margin: 1px 2px 3px;
  display: grid;
  grid-template: minmax(0, 1fr) 12px / minmax(0, 1fr) 13px;
  border: 1px solid #d6d6da;
  background: #fff;
}
.tree { list-style: none; margin: 0; padding: 7px 0 0; overflow: hidden; color: #111; }
.tree li { height: 30px; display: flex; align-items: center; gap: 6px; white-space: nowrap; }
.tree li .ic { margin-right: -1px; }
.tree .l1 { padding-left: 16px; }
.tree .l2 { padding-left: 31px; }
.tree .l3 { padding-left: 46px; }
.tree .sel { background: #93b373; color: #fff; }
.tg { width: 11px; height: 11px; flex: none; border: 1px solid #c4c4c4; border-radius: 2px; background: linear-gradient(#555, #555) center / 5px 1px no-repeat #fff; }
.tg.plus { background: linear-gradient(#555, #555) center / 5px 1px no-repeat, linear-gradient(#555, #555) center / 1px 5px no-repeat #fff; }
.tg.none { visibility: hidden; }
.vscroll { border-left: 1px solid #d6d6da; padding: 33px 3px 0; background: #fcfcfc; }
.vscroll i { display: block; height: 172px; border-radius: 3px; background: #b7b7b7; }
.hscroll { border-top: 1px solid #d6d6da; padding: 3px 2px 0; background: #fcfcfc; }
.hscroll i { display: block; width: 155px; height: 6px; border-radius: 3px; background: #b7b7b7; }
.corner { background: #efefef; margin: 0 4px 3px 0; }

.settings { padding: 3px 7px 0 4px; display: flex; flex-direction: column; }
.build { height: 30px; margin-top: 8px; padding-left: 9px; display: flex; align-items: center; gap: 4px; align-self: flex-start; }
.name { display: flex; align-items: center; gap: 6px; margin: 18px 5px 10px 8px; }
.name input { flex: 1; min-width: 0; height: 32px; border: 1px solid #cdcdcd; border-radius: 4px; padding: 0 7px; background: #fafbff; }
.group { margin: 0 0 10px 3px; display: flex; flex-direction: column; }
.group > * { margin-left: 12px; }
.group h2 {
  margin: 0 0 1px;
  height: 28px;
  display: flex;
  align-items: center;
  gap: 6px;
  padding: 0 0 2px 7px;
  border-top: 1px solid #c3d6b0;
  border-radius: 4px 4px 0 0;
  background:
    linear-gradient(#cfdec1, #fafbff) left / 1px 100% no-repeat,
    linear-gradient(#cfdec1, #fafbff) right / 1px 100% no-repeat,
    linear-gradient(#e6eee0, #fafbff);
  font-size: 13px;
  font-weight: 700;
  color: #56694a;
}
.group h2 span { background: #f6f9f6; }
.tri { border: 4px solid transparent; border-top: 4px solid #56694a; border-bottom: 0; }
.group label { margin-top: 5px; margin-bottom: 4px; }
.group .check { display: flex; align-items: center; gap: 7px; margin: 7px 0 3px 14px; }
.group .check.last { margin-top: 14px; }
.check input { appearance: none; width: 14px; height: 14px; margin: 0; border: 1px solid #cdcdcd; border-radius: 2px; background: #fff; display: grid; place-items: center; }
.check input:checked { background: #93b373; border-color: #93b373; }
.check input:checked::after { content: ""; width: 8px; height: 4px; margin-bottom: 3px; border: solid #fff; border-width: 0 0 2px 2px; transform: rotate(-45deg); }
.pick { position: relative; margin-right: 12px; }
.pick select { appearance: none; display: block; width: 100%; height: 30px; border: 1px solid #cdcdcd; border-radius: 3px; padding: 0 5px; background: #fcfffd; color: #111; }
.pick svg { position: absolute; right: 5px; top: 6px; color: #555; pointer-events: none; }

.view { flex: 1; min-height: 0; display: flex; flex-direction: column; border: 2px solid #dbe9f8; border-bottom: 0; background: linear-gradient(#fafbff 10%, #f4f8ff 30%, #dbedff 95%); }
.view .strip { height: 38px; padding-left: 4px; overflow: hidden; }
.scene { flex: 1; min-height: 0; width: 100%; display: block; overflow: hidden; }
.grid { fill: none; stroke: #858789; stroke-width: 1.1; }
.edge { stroke: #1a1a1a; stroke-width: 1.2; stroke-linejoin: round; }
.edge:not([fill]) { fill: none; }
.soft { stroke: #8a8a8a; }
.ticks { font-size: 13px; fill: #111; }
.ticks .unit { fill: #333; }

.rail { display: flex; flex-direction: column; padding-top: 1px; }
.rail hr { width: 28px; margin: 0 0 6px 1px; border: 0; border-top: 2px dashed #b3b0a6; height: 0; }
.rail .ib { width: 30px; height: 30px; }
.rail .ib + hr { margin-top: 5px; }

.status { height: 26px; flex: none; display: flex; justify-content: flex-end; background: linear-gradient(#fafbff 60%, #d4d5d8); }
.status span { width: 148px; height: 22px; line-height: 22px; margin-right: 238px; padding-left: 6px; border: solid #d8d8dc; border-width: 0 1px; }
.dock { height: 3px; flex: none; background: #333; }
.dock i { display: block; width: 91px; height: 3px; margin-left: 159px; background: #8bab6c; }
```
